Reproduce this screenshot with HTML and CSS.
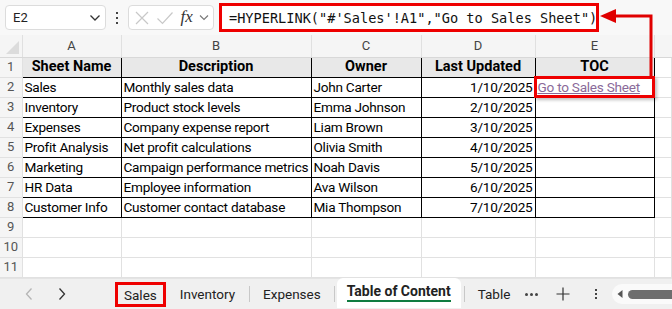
FILE: index.html
```html
<!DOCTYPE html>
<html lang="en">
<head>
    <meta charset="UTF-8">
    <meta name="viewport" content="width=device-width, initial-scale=1.0">
    <title>Table of Content - Excel</title>
    <link rel="stylesheet" href="styles.css">
</head>
<body>
    <div class="sheet-window">
        <div class="formula-bar">
            <div class="name-box">
                <span>E2</span>
                <svg class="chevron" width="12" height="8" viewBox="0 0 12 8"><path d="M1.5 1.5 L6 6 L10.5 1.5" fill="none" stroke="#333" stroke-width="1.3"/></svg>
            </div>
            <div class="bar-dots">
                <span></span><span></span><span></span>
            </div>
            <div class="fx-box">
                <svg width="16" height="16" viewBox="0 0 16 16"><path d="M2 2 L14 14 M14 2 L2 14" stroke="#c8c8c8" stroke-width="1.2"/></svg>
                <svg width="18" height="16" viewBox="0 0 18 16"><path d="M1.5 8.5 L6.5 13.5 L16.5 2.5" fill="none" stroke="#c8c8c8" stroke-width="1.2"/></svg>
                <span class="fx-label">fx</span>
                <svg width="10" height="7" viewBox="0 0 10 7"><path d="M1 1.5 L5 5.5 L9 1.5" fill="none" stroke="#777" stroke-width="1.1"/></svg>
            </div>
            <div class="formula-input">=HYPERLINK("#'Sales'!A1","Go to Sales Sheet")</div>
        </div>

        <table class="grid">
            <colgroup>
                <col class="col-num">
                <col class="col-a">
                <col class="col-b">
                <col class="col-c">
                <col class="col-d">
                <col class="col-e">
                <col>
            </colgroup>
            <thead>
                <tr class="col-heads">
                    <th class="corner"><span class="corner-mark"></span></th>
                    <th>A</th>
                    <th>B</th>
                    <th>C</th>
                    <th>D</th>
                    <th>E</th>
                    <th></th>
                </tr>
            </thead>
            <tbody>
                <tr class="head-row">
                    <td class="row-num">1</td>
                    <td class="cell">Sheet Name</td>
                    <td class="cell">Description</td>
                    <td class="cell">Owner</td>
                    <td class="cell">Last Updated</td>
                    <td class="cell">TOC</td>
                    <td></td>
                </tr>
                <tr>
                    <td class="row-num">2</td>
                    <td class="cell">Sales</td>
                    <td class="cell">Monthly sales data</td>
                    <td class="cell">John Carter</td>
                    <td class="cell date">1/10/2025</td>
                    <td class="cell"><a class="link" href="#">Go to Sales Sheet</a></td>
                    <td></td>
                </tr>
                <tr>
                    <td class="row-num">3</td>
                    <td class="cell">Inventory</td>
                    <td class="cell">Product stock levels</td>
                    <td class="cell">Emma Johnson</td>
                    <td class="cell date">2/10/2025</td>
                    <td class="cell"></td>
                    <td></td>
                </tr>
                <tr>
                    <td class="row-num">4</td>
                    <td class="cell">Expenses</td>
                    <td class="cell">Company expense report</td>
                    <td class="cell">Liam Brown</td>
                    <td class="cell date">3/10/2025</td>
                    <td class="cell"></td>
                    <td></td>
                </tr>
                <tr>
                    <td class="row-num">5</td>
                    <td class="cell">Profit Analysis</td>
                    <td class="cell">Net profit calculations</td>
                    <td class="cell">Olivia Smith</td>
                    <td class="cell date">4/10/2025</td>
                    <td class="cell"></td>
                    <td></td>
                </tr>
                <tr>
                    <td class="row-num">6</td>
                    <td class="cell">Marketing</td>
                    <td class="cell">Campaign performance metrics</td>
                    <td class="cell">Noah Davis</td>
                    <td class="cell date">5/10/2025</td>
                    <td class="cell"></td>
                    <td></td>
                </tr>
                <tr>
                    <td class="row-num">7</td>
                    <td class="cell">HR Data</td>
                    <td class="cell">Employee information</td>
                    <td class="cell">Ava Wilson</td>
                    <td class="cell date">6/10/2025</td>
                    <td class="cell"></td>
                    <td></td>
                </tr>
                <tr>
                    <td class="row-num">8</td>
                    <td class="cell">Customer Info</td>
                    <td class="cell">Customer contact database</td>
                    <td class="cell">Mia Thompson</td>
                    <td class="cell date">7/10/2025</td>
                    <td class="cell"></td>
                    <td></td>
                </tr>
                <tr class="empty-row">
                    <td class="row-num">9</td>
                    <td></td><td></td><td></td><td></td><td></td><td></td>
                </tr>
                <tr class="empty-row">
                    <td class="row-num">10</td>
                    <td></td><td></td><td></td><td></td><td></td><td></td>
                </tr>
                <tr class="empty-row">
                    <td class="row-num">11</td>
                    <td></td><td></td><td></td><td></td><td></td><td></td>
                </tr>
            </tbody>
        </table>

        <div class="tab-bar">
            <div class="tab-nav">
                <svg width="10" height="14" viewBox="0 0 10 14"><path d="M7.5 1.5 L2.5 7 L7.5 12.5" fill="none" stroke="#b5b5b5" stroke-width="1.3"/></svg>
                <svg width="10" height="14" viewBox="0 0 10 14"><path d="M2.5 1.5 L7.5 7 L2.5 12.5" fill="none" stroke="#333" stroke-width="1.3"/></svg>
            </div>
            <div class="tabs">
                <span class="tab tab-marked">Sales</span>
                <span class="tab tab-wide">Inventory</span>
                <span class="tab-sep"></span>
                <span class="tab">Expenses</span>
                <span class="tab-sep"></span>
                <span class="tab tab-active"><span class="tab-title">Table of Content</span></span>
                <span class="tab-sep"></span>
                <span class="tab">Table</span>
            </div>
            <div class="tab-tools">
                <span class="more-dots"><i></i><i></i><i></i></span>
                <svg class="plus" width="14" height="14" viewBox="0 0 14 14"><path d="M7 0.5 V13.5 M0.5 7 H13.5" stroke="#333" stroke-width="1.2"/></svg>
                <span class="vert-dots"><i></i><i></i><i></i></span>
            </div>
            <div class="h-scroll">
                <svg width="6" height="8" viewBox="0 0 6 8"><path d="M5.5 0 V8 L0.5 4 Z" fill="#555"/></svg>
                <span class="thumb"></span>
            </div>
        </div>

        <!-- выделение ячейки и стрелка к строке формул -->
        <div class="cell-mark"></div>
        <svg class="pointer" width="672" height="100" viewBox="0 0 672 100">
            <path d="M651 78 V16 H614" fill="none" stroke="#e00000" stroke-width="3"/>
            <path d="M600 16 L616 9 L616 23 Z" fill="#e00000"/>
        </svg>
    </div>
</body>
</html>
```

FILE: styles.css
```css
* {
    box-sizing: border-box;
}
body {
    margin: 0;
    background: #ffffff;
    font-family: Roboto, "Noto Sans", sans-serif;
    color: #000;
}
.sheet-window {
    position: relative;
    width: 672px;
    height: 309px;
    overflow: hidden;
    background: #ffffff;
}

/* строка формул */
.formula-bar {
    height: 35px;
    display: flex;
    align-items: center;
    padding: 0 0 0 5px;
    background: #f8f8f8;
}
.name-box {
    width: 101px;
    height: 25px;
    display: flex;
    align-items: center;
    justify-content: space-between;
    padding: 0 4px 0 7px;
    background: #fff;
    border: 1px solid #dcdcdc;
    border-radius: 4px;
    font-size: 13px;
    color: #222;
}
.bar-dots {
    width: 22px;
    display: flex;
    flex-direction: column;
    align-items: center;
    gap: 3px;
}
.bar-dots span {
    width: 2px;
    height: 2px;
    background: #444;
}
.fx-box {
    width: 86px;
    height: 25px;
    display: flex;
    align-items: center;
    justify-content: space-between;
    padding: 0 4px 0 5px;
    background: #fff;
    border: 1px solid #dcdcdc;
    border-radius: 4px;
}
.fx-label {
    font-family: "Liberation Serif", serif;
    font-style: italic;
    font-size: 17px;
    color: #333;
    margin-bottom: 2px;
}
.formula-input {
    width: 380px;
    height: 29px;
    margin-left: 5px;
    padding: 0 0 0 7px;
    display: flex;
    align-items: center;
    background: #fff;
    border: 3px solid #ee0000;
    font-family: "DejaVu Sans Mono", "Liberation Mono", monospace;
    font-size: 13.6px;
    color: #111;
    white-space: nowrap;
}

/* сетка */
.grid {
    border-collapse: collapse;
    table-layout: fixed;
    width: 672px;
}
.col-num { width: 22px; }
.col-a { width: 99px; }
.col-b { width: 190px; }
.col-c { width: 110px; }
.col-d { width: 114px; }
.col-e { width: 119px; }
.col-heads th {
    height: 22px;
    padding: 0;
    background: #f5f5f5;
    font-weight: normal;
    font-size: 13px;
    color: #444;
    border-left: 1px solid #e0e0e0;
    border-bottom: 1px solid #d8d8d8;
    vertical-align: middle;
}
.col-heads th:first-child {
    border-left: none;
}
.corner {
    position: relative;
}
.corner-mark {
    position: absolute;
    right: 3px;
    bottom: 3px;
    width: 0;
    height: 0;
    border-left: 13px solid transparent;
    border-bottom: 13px solid #dcdcdc;
}
.grid td {
    height: 20px;
    padding: 0 2px;
    font-size: 13.6px;
    letter-spacing: -0.25px;
    line-height: 18px;
    white-space: nowrap;
    overflow: hidden;
    border: 1px solid #e1e1e1;
}
.grid td.row-num {
    background: #f5f5f5;
    text-align: center;
    font-size: 13px;
    letter-spacing: 0;
    color: #555;
    border-color: #e1e1e1;
    border-left: none;
}
.grid td.cell {
    border: 1px solid #000;
}
.head-row td.cell {
    background: #e8e8e8;
    font-weight: bold;
    font-size: 14.5px;
    letter-spacing: 0;
    text-align: center;
}
.date {
    text-align: right;
}
.link {
    color: #8a6a9a;
    text-decoration: underline;
}

/* вкладки */
.tab-bar {
    height: 32px;
    display: flex;
    align-items: center;
    background: #f0f0f0;
    border-top: 1px solid #e4e4e4;
}
.tab-nav {
    width: 115px;
    display: flex;
    gap: 23px;
    padding-left: 24px;
}
.tabs {
    display: flex;
    align-items: center;
    height: 100%;
}
.tab {
    height: 100%;
    display: flex;
    align-items: center;
    padding: 0 13px;
    font-size: 13.5px;
    color: #222;
}
.tab-wide {
    padding: 0 14px;
}
.tab-sep {
    width: 1px;
    height: 16px;
    background: #c8c8c8;
}
.tab-marked {
    padding: 0 6px;
    height: 25px;
    margin-top: 1px;
    border: 3px solid #ee0000;
}
.tab-active {
    background: #fff;
    border-radius: 6px 6px 0 0;
    font-weight: bold;
    font-size: 14px;
    padding: 0 10px;
    margin: -3px 3px 0 2px;
    height: 30px;
}
.tab-title {
    border-bottom: 2px solid #107c41;
    padding-bottom: 1px;
}
.tab-tools {
    display: flex;
    align-items: center;
    padding-left: 2px;
}
.more-dots {
    display: flex;
    gap: 2px;
}
.more-dots i {
    width: 3px;
    height: 3px;
    background: #444;
    border-radius: 50%;
}
.plus {
    margin-left: 18px;
}
.vert-dots {
    margin-left: 25px;
    display: flex;
    flex-direction: column;
    gap: 2px;
}
.vert-dots i {
    width: 2px;
    height: 2px;
    background: #444;
}
.h-scroll {
    margin-left: 15px;
    flex: 1;
    height: 20px;
    display: flex;
    align-items: center;
    gap: 5px;
    padding-left: 5px;
    background: #fafafa;
    border-radius: 10px 0 0 10px;
}
.thumb {
    flex: 1;
    height: 9px;
    background: #6e6e6e;
    border-radius: 5px 0 0 5px;
}

/* выделение */
.cell-mark {
    position: absolute;
    left: 534px;
    top: 76px;
    width: 121px;
    height: 22px;
    border: 3px solid #ee0000;
    box-shadow: 2px 2px 3px rgba(0, 0, 0, 0.25);
}
.pointer {
    position: absolute;
    left: 0;
    top: 0;
}
```
